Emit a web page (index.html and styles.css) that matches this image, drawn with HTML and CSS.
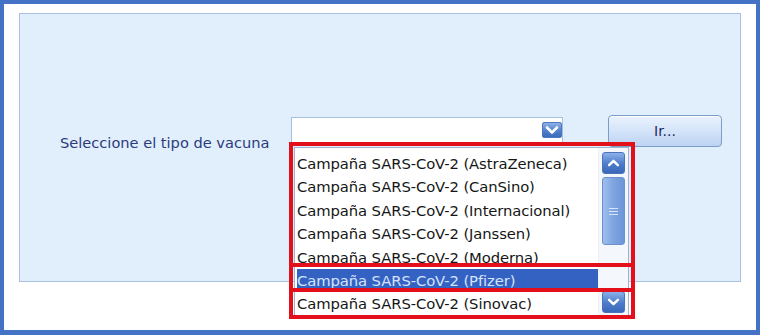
FILE: index.html
```html
<!DOCTYPE html>
<html lang="es">
<head>
<meta charset="utf-8">
<title>Seleccione el tipo de vacuna</title>
<link rel="stylesheet" href="styles.css">
</head>
<body>
<div class="window">
  <div class="panel">
    <div class="form-row">
      <label class="label">Seleccione el tipo de vacuna</label>
      <div class="combo">
        <div class="combo-field"></div>
        <span class="combo-btn">
          <svg viewBox="0 0 20 16" width="20" height="16"><path d="M5 5.5 L10 10.5 L15 5.5" fill="none" stroke="#fff" stroke-width="2.6" stroke-linecap="round" stroke-linejoin="round"/></svg>
        </span>
        <div class="dropdown">
          <ul class="options">
            <li>Campaña SARS-CoV-2 (AstraZeneca)</li>
            <li>Campaña SARS-CoV-2 (CanSino)</li>
            <li>Campaña SARS-CoV-2 (Internacional)</li>
            <li>Campaña SARS-CoV-2 (Janssen)</li>
            <li>Campaña SARS-CoV-2 (Moderna)</li>
            <li class="selected">Campaña SARS-CoV-2 (Pfizer)</li>
            <li>Campaña SARS-CoV-2 (Sinovac)</li>
          </ul>
          <div class="scrollbar">
            <span class="sb-btn">
              <svg viewBox="0 0 24 20" width="24" height="20"><path d="M7 12.5 L12 7.5 L17 12.5" fill="none" stroke="#fff" stroke-width="2.8" stroke-linecap="round" stroke-linejoin="round"/></svg>
            </span>
            <span class="sb-thumb"><span class="grip"></span></span>
            <span class="sb-space"></span>
            <span class="sb-btn">
              <svg viewBox="0 0 24 20" width="24" height="20"><path d="M7 7.5 L12 12.5 L17 7.5" fill="none" stroke="#fff" stroke-width="2.8" stroke-linecap="round" stroke-linejoin="round"/></svg>
            </span>
          </div>
        </div>
        <div class="mark mark-list"></div>
        <div class="mark mark-row"></div>
      </div>
      <button class="go-btn" type="button">Ir...</button>
    </div>
  </div>
</div>
</body>
</html>
```
FILE: styles.css
```css
* { box-sizing: border-box; }
html, body { margin: 0; padding: 0; background: #ffffff; }
body { font-family: "DejaVu Sans", Verdana, sans-serif; }

.window {
  width: 760px;
  height: 335px;
  border: 4px solid #4472c4;
  border-bottom-width: 5px;
  background: #ffffff;
  padding: 9px 15px 48px 15px;
  display: flex;
}

.panel {
  flex: 1;
  border: 1px solid #a9c2e3;
  background: #e1effd;
  padding: 103px 0 0 40px;
}

.form-row {
  display: flex;
  align-items: flex-start;
}

.label {
  font-size: 14.6px;
  color: #2c3a7c;
  width: 231px;
  flex: none;
  padding-top: 17px;
  white-space: nowrap;
}

.combo {
  position: relative;
  width: 272px;
  height: 28px;
  flex: none;
  margin-right: 45px;
}

.combo-field {
  height: 28px;
  border: 1px solid #a6bedf;
  background: #ffffff;
}

.combo-btn {
  position: absolute;
  left: 251px;
  top: 5px;
  width: 20px;
  height: 16px;
  border-radius: 2px;
  background: linear-gradient(#8fb3e8, #4f7fcc 55%, #3d6cbd);
  border: 1px solid #4c77bd;
  display: flex;
  align-items: center;
  justify-content: center;
}
.combo-btn svg { display: block; margin: -1px; }

.dropdown {
  position: absolute;
  left: 3px;
  top: 30px;
  width: 335px;
  height: 169px;
  background: #ffffff;
  border: 1px solid #9fb3cf;
  display: flex;
  z-index: 2;
  overflow: hidden;
}

.options {
  list-style: none;
  margin: 0;
  padding: 4px 0 0 2px;
  flex: 1;
}
.options li {
  height: 23.4px;
  line-height: 23.4px;
  font-size: 14.8px;
  color: #161616;
  white-space: nowrap;
  letter-spacing: -0.1px;
}
.options li.selected {
  background: #3462c3;
  color: #d6e3fb;
}

.scrollbar {
  width: 30px;
  flex: none;
  display: flex;
  flex-direction: column;
  padding: 4px 3px 2px 3px;
  background: #f4f7fc;
  border-left: 1px solid #eef2f8;
}
.sb-btn {
  height: 22px;
  border-radius: 3px;
  background: linear-gradient(#8cb0e8, #4c7bcb 55%, #3a69ba);
  border: 1px solid #4a74ba;
  display: flex;
  align-items: center;
  justify-content: center;
}
.sb-btn svg { display: block; }
.sb-thumb {
  margin-top: 3px;
  height: 68px;
  border-radius: 3px;
  background: linear-gradient(90deg, #9fbeec, #7ea4e0 50%, #6d96d8);
  border: 1px solid #6b91cf;
  display: flex;
  align-items: center;
  justify-content: center;
}
.grip {
  width: 9px;
  height: 7px;
  border-top: 1px solid #d8e5f8;
  border-bottom: 1px solid #d8e5f8;
  position: relative;
}
.grip::after {
  content: "";
  position: absolute;
  left: 0;
  right: 0;
  top: 2px;
  border-top: 1px solid #d8e5f8;
}
.sb-space { flex: 1; }

.mark {
  position: absolute;
  border: 4px solid #e3101c;
  z-index: 3;
  pointer-events: none;
}
.mark-list {
  left: -2px;
  top: 25px;
  width: 346px;
  height: 177px;
}
.mark-row {
  left: -2px;
  top: 146px;
  width: 346px;
  height: 29px;
}

.go-btn {
  width: 114px;
  height: 32px;
  margin-top: -2px;
  border: 1px solid #7d9cc8;
  border-radius: 4px;
  background: linear-gradient(#eaf2fd, #d4e4f9 50%, #bcd3f2);
  box-shadow: inset 0 1px 0 #ffffff;
  font-family: "DejaVu Sans", Verdana, sans-serif;
  font-size: 14px;
  color: #1f2a5c;
  padding: 0;
}
```
